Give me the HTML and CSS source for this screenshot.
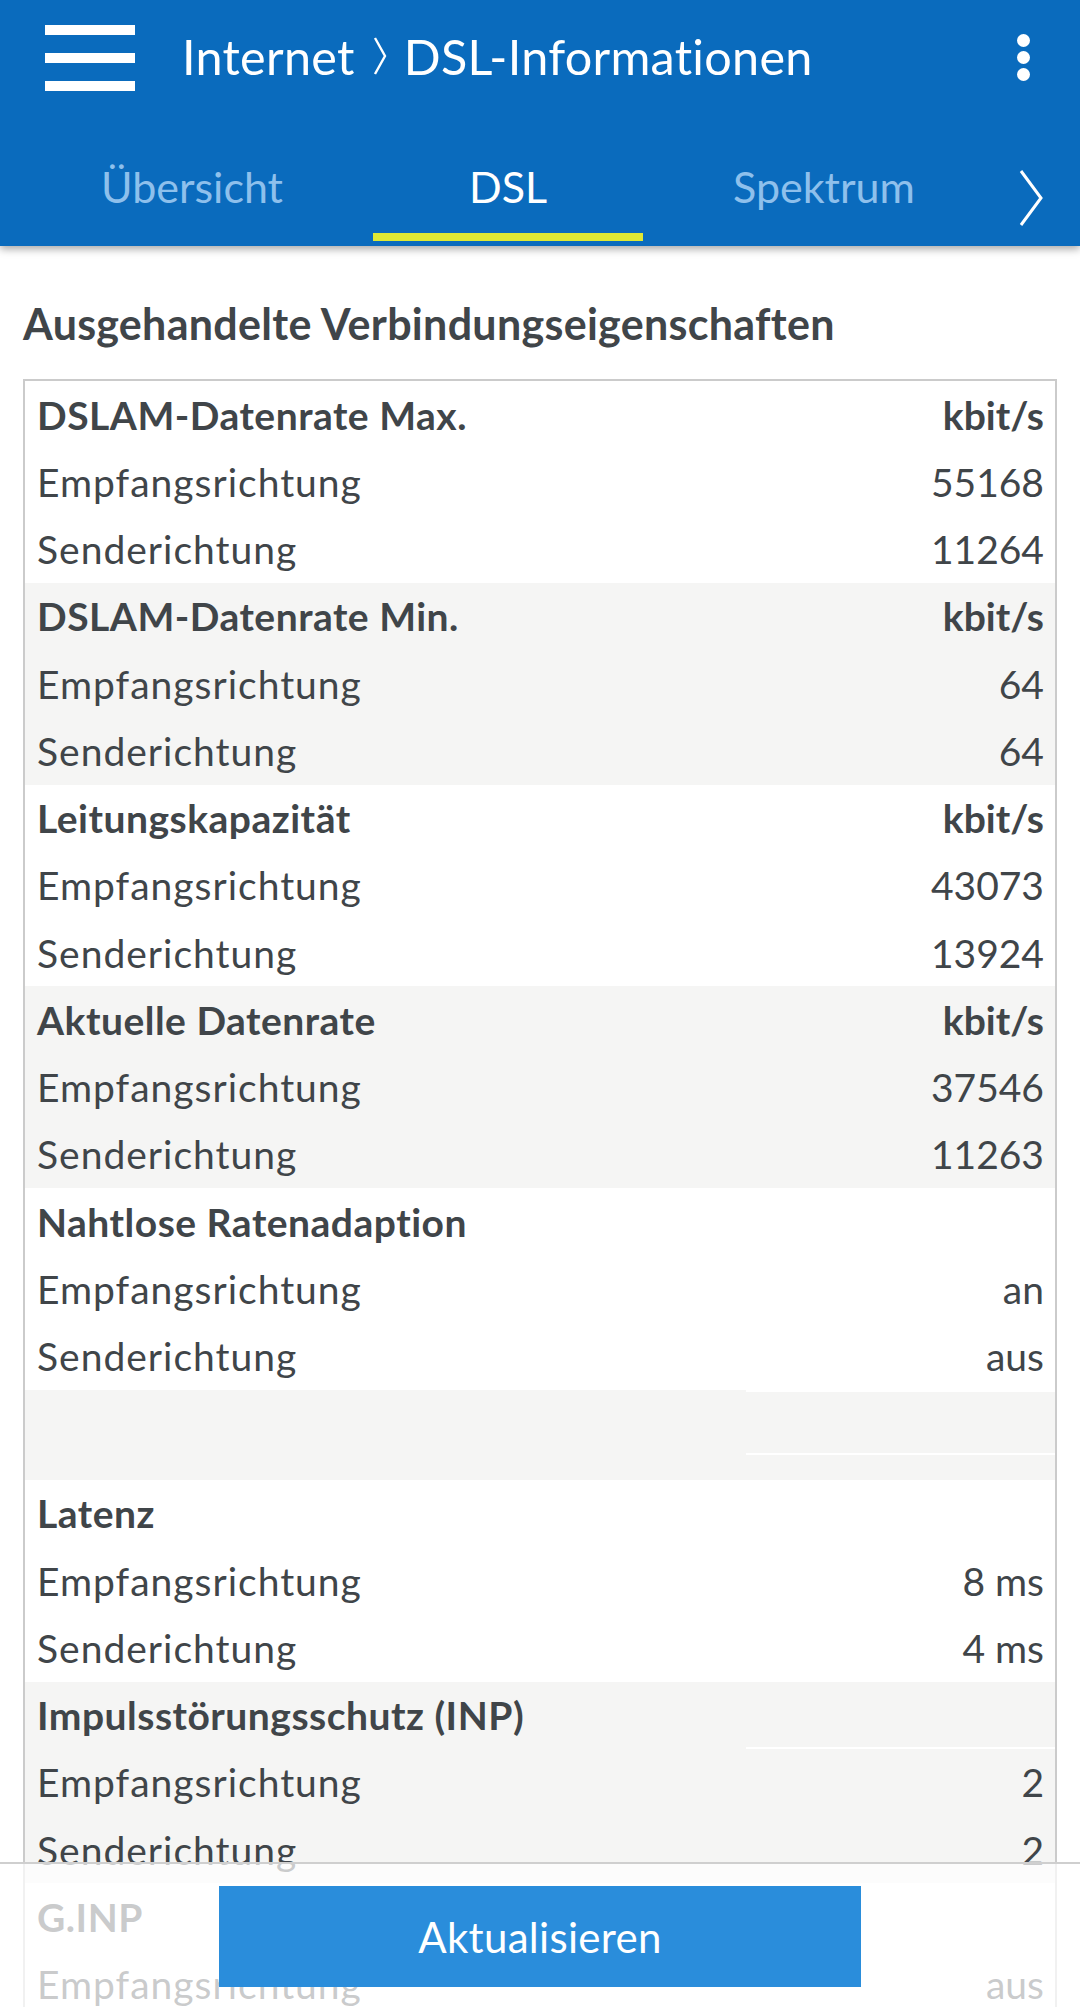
FILE: index.html
```html
<!DOCTYPE html>
<html lang="de">
<head>
<meta charset="utf-8">
<title>DSL-Informationen</title>
<link rel="stylesheet" href="styles.css">
</head>
<body>
<header class="appbar">
  <div class="topbar">
    <div class="burger"><span></span><span></span><span></span></div>
    <div class="title">Internet<svg class="crumb" viewBox="0 0 16 40" width="16" height="40"><polyline points="3,2 13,20 3,38" fill="none" stroke="#fff" stroke-width="2.4"/></svg>DSL-Informationen</div>
    <div class="kebab"><span></span><span></span><span></span></div>
  </div>
  <nav class="tabs">
    <div class="tab">Übersicht</div>
    <div class="tab active">DSL</div>
    <div class="tab">Spektrum</div>
    <svg class="more" viewBox="0 0 26 58" width="26" height="58"><polyline points="3,2 23,29 3,56" fill="none" stroke="#fff" stroke-width="3"/></svg>
  </nav>
</header>

<main class="content">
  <h1 class="heading">Ausgehandelte Verbindungseigenschaften</h1>
  <div class="table">
    <div class="group">
      <div class="row head"><span class="lbl">DSLAM-Datenrate Max.</span><span class="val">kbit/s</span></div>
      <div class="row"><span class="lbl">Empfangsrichtung</span><span class="val">55168</span></div>
      <div class="row"><span class="lbl">Senderichtung</span><span class="val">11264</span></div>
    </div>
    <div class="group alt">
      <div class="row head"><span class="lbl">DSLAM-Datenrate Min.</span><span class="val">kbit/s</span></div>
      <div class="row"><span class="lbl">Empfangsrichtung</span><span class="val">64</span></div>
      <div class="row"><span class="lbl">Senderichtung</span><span class="val">64</span></div>
    </div>
    <div class="group">
      <div class="row head"><span class="lbl">Leitungskapazität</span><span class="val">kbit/s</span></div>
      <div class="row"><span class="lbl">Empfangsrichtung</span><span class="val">43073</span></div>
      <div class="row"><span class="lbl">Senderichtung</span><span class="val">13924</span></div>
    </div>
    <div class="group alt">
      <div class="row head"><span class="lbl">Aktuelle Datenrate</span><span class="val">kbit/s</span></div>
      <div class="row"><span class="lbl">Empfangsrichtung</span><span class="val">37546</span></div>
      <div class="row"><span class="lbl">Senderichtung</span><span class="val">11263</span></div>
    </div>
    <div class="group">
      <div class="row head"><span class="lbl">Nahtlose Ratenadaption</span><span class="val"></span></div>
      <div class="row"><span class="lbl">Empfangsrichtung</span><span class="val">an</span></div>
      <div class="row"><span class="lbl">Senderichtung</span><span class="val">aus</span></div>
    </div>
    <div class="spacer alt"><div class="sp-left"></div><div class="sp-right"><div class="sp-top"></div><div class="sp-bottom"></div></div></div>
    <div class="group">
      <div class="row head"><span class="lbl">Latenz</span><span class="val"></span></div>
      <div class="row"><span class="lbl">Empfangsrichtung</span><span class="val">8 ms</span></div>
      <div class="row"><span class="lbl">Senderichtung</span><span class="val">4 ms</span></div>
    </div>
    <div class="group alt">
      <div class="row head split"><span class="lbl">Impulsstörungsschutz (INP)</span><span class="val"></span></div>
      <div class="row"><span class="lbl">Empfangsrichtung</span><span class="val">2</span></div>
      <div class="row"><span class="lbl">Senderichtung</span><span class="val">2</span></div>
    </div>
    <div class="group">
      <div class="row head"><span class="lbl">G.INP</span><span class="val"></span></div>
      <div class="row"><span class="lbl">Empfangsrichtung</span><span class="val">aus</span></div>
      <div class="row"><span class="lbl">Senderichtung</span><span class="val">aus</span></div>
    </div>
  </div>
</main>

<footer class="actionbar">
  <button class="btn">Aktualisieren</button>
</footer>
</body>
</html>
```

FILE: styles.css
```css
* { box-sizing: border-box; }
html, body { margin: 0; padding: 0; }
body {
  width: 1080px;
  height: 2007px;
  overflow: hidden;
  background: #ffffff;
  font-family: "Lato", "Noto Sans", sans-serif;
  color: #404549;
}

.appbar {
  height: 246px;
  background: #0a6bbd;
  box-shadow: 0 3px 8px rgba(0,0,0,0.35);
  position: relative;
  z-index: 2;
}
.topbar {
  height: 118px;
  display: flex;
  align-items: flex-start;
  padding-left: 45px;
}
.burger {
  width: 90px;
  margin-top: 25px;
  display: flex;
  flex-direction: column;
  gap: 18px;
}
.burger span {
  display: block;
  height: 10px;
  background: #ffffff;
}
.title {
  margin-left: 47px;
  margin-top: 24px;
  font-size: 48.5px;
  line-height: 64px;
  color: #ffffff;
  display: flex;
  align-items: center;
  letter-spacing: 0.3px;
}
.crumb { margin: 0 16px 0 17px; }
.kebab {
  margin-left: auto;
  margin-right: 50px;
  margin-top: 34px;
  display: flex;
  flex-direction: column;
  gap: 4px;
}
.kebab span {
  width: 13px;
  height: 13px;
  border-radius: 50%;
  background: #ffffff;
}

.tabs {
  height: 128px;
  display: flex;
  align-items: flex-start;
  padding-left: 57px;
  gap: 46px;
}
.tab {
  width: 270px;
  height: 123px;
  text-align: center;
  font-size: 43px;
  line-height: 50px;
  padding-top: 44px;
  color: #8ec0ec;
}
.tab.active {
  color: #ffffff;
  border-bottom: 8px solid #dfe834;
}
.more { margin-left: 13px; margin-top: 51px; }

.content {
  padding: 0 23px;
}
.heading {
  margin: 0;
  padding-top: 53px;
  height: 133px;
  font-size: 43px;
  line-height: 50px;
  font-weight: 700;
  letter-spacing: 0.3px;
  color: #404549;
}
.table {
  border: 2px solid #cbcbcb;
  width: 1034px;
}
.group { background: #ffffff; }
.alt { background: #f5f5f4; }
.row {
  height: 67.25px;
  display: flex;
  justify-content: space-between;
  align-items: center;
  padding: 0 11px 0 12px;
  font-size: 39px;
  line-height: 50px;
}
.row .lbl { letter-spacing: 1px; }
.row.head { font-weight: 700; }
.row.head .lbl { letter-spacing: 0.5px; }
.row .val { text-align: right; }
.row.split { position: relative; }
.row.split::after {
  content: "";
  position: absolute;
  left: 721px; right: 0; bottom: 0;
  height: 2px;
  background: #ffffff;
}

.spacer {
  height: 90px;
  display: flex;
}
.sp-left { width: 721px; }
.sp-right {
  flex: 1;
  display: flex;
  flex-direction: column;
  border-top: 2px solid #ffffff;
}
.sp-top { height: 63px; border-bottom: 2px solid #ffffff; }
.sp-bottom { flex: 1; }

.actionbar {
  position: fixed;
  left: 0; right: 0; bottom: 0;
  height: 145px;
  border-top: 2px solid #cfcfcf;
  background: rgba(255,255,255,0.72);
  display: flex;
  justify-content: center;
  padding-top: 22px;
  z-index: 3;
}
.btn {
  width: 642px;
  height: 101px;
  border: none;
  background: #2a8ddb;
  color: #ffffff;
  font-family: "Lato", "Noto Sans", sans-serif;
  font-size: 42px;
  letter-spacing: 0.3px;
  padding: 0;
}
```
